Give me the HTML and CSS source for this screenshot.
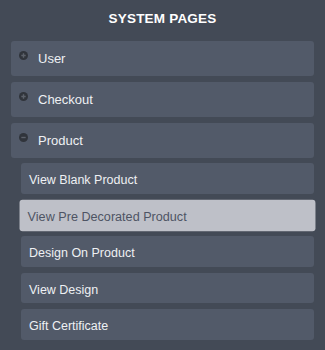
FILE: index.html
```html
<html>
<head>
    <meta charset="UTF-8">
    <meta name="viewport" content="width=device-width, initial-scale=1.0">
    <title>System Pages</title>
    <link rel="stylesheet" href="styles.css">
</head>

<body>
<div class="panel">
    <div class="title">SYSTEM PAGES</div>
    <div class="menu">
        <div class="menu_item">
            <svg class="toggle" width="9" height="9" viewBox="0 0 9 9"><circle cx="4.5" cy="4.5" r="4.5" fill="#30343b"/><path d="M2.3 4.5h4.4M4.5 2.3v4.4" stroke="#5c616a" stroke-width="1.4"/></svg>
            User
        </div>
        <div class="menu_item">
            <svg class="toggle" width="9" height="9" viewBox="0 0 9 9"><circle cx="4.5" cy="4.5" r="4.5" fill="#30343b"/><path d="M2.3 4.5h4.4M4.5 2.3v4.4" stroke="#5c616a" stroke-width="1.4"/></svg>
            Checkout
        </div>
        <div class="menu_item">
            <svg class="toggle" width="9" height="9" viewBox="0 0 9 9"><circle cx="4.5" cy="4.5" r="4.5" fill="#30343b"/><path d="M2.3 4.5h4.4" stroke="#5c616a" stroke-width="1.4"/></svg>
            Product
        </div>
        <div class="sub_menu">
            <div class="sub_item">View Blank Product</div>
            <div class="sub_item active">View Pre Decorated Product</div>
            <div class="sub_item">Design On Product</div>
            <div class="sub_item">View Design</div>
            <div class="sub_item">Gift Certificate</div>
        </div>
    </div>
</div>
</body>
</html>
```

FILE: styles.css
```css
* {
    margin: 0;
    padding: 0;
}

body {
    background: #434a56;
    font-family: "Liberation Sans", Arial, sans-serif;
}

.panel {
    width: 303px;
    padding: 0 11px;
}

.title {
    padding-top: 10px;
    margin-bottom: 13px;
    line-height: 18px;
    font-size: 13.5px;
    font-weight: bold;
    letter-spacing: 0.2px;
    text-align: center;
    color: #ffffff;
}

.menu_item {
    display: flex;
    align-items: center;
    height: 35px;
    margin-bottom: 6px;
    padding-left: 8px;
    border-radius: 3px;
    background: #525a69;
    font-size: 13px;
    color: #eef0f3;
}

.toggle {
    align-self: flex-start;
    margin: 10px 10px 0 0;
}

.sub_menu {
    margin: -1px 0 0 10px;
}

.sub_item {
    display: flex;
    align-items: center;
    box-sizing: border-box;
    height: 30.5px;
    margin-bottom: 6px;
    padding: 4px 0 0 8px;
    border-radius: 3px;
    background: #525a69;
    font-size: 12.5px;
    color: #eef0f3;
}

.sub_item.active {
    background: #bec0c8;
    color: #4e5464;
    transform: scale(1.01);
}
```
